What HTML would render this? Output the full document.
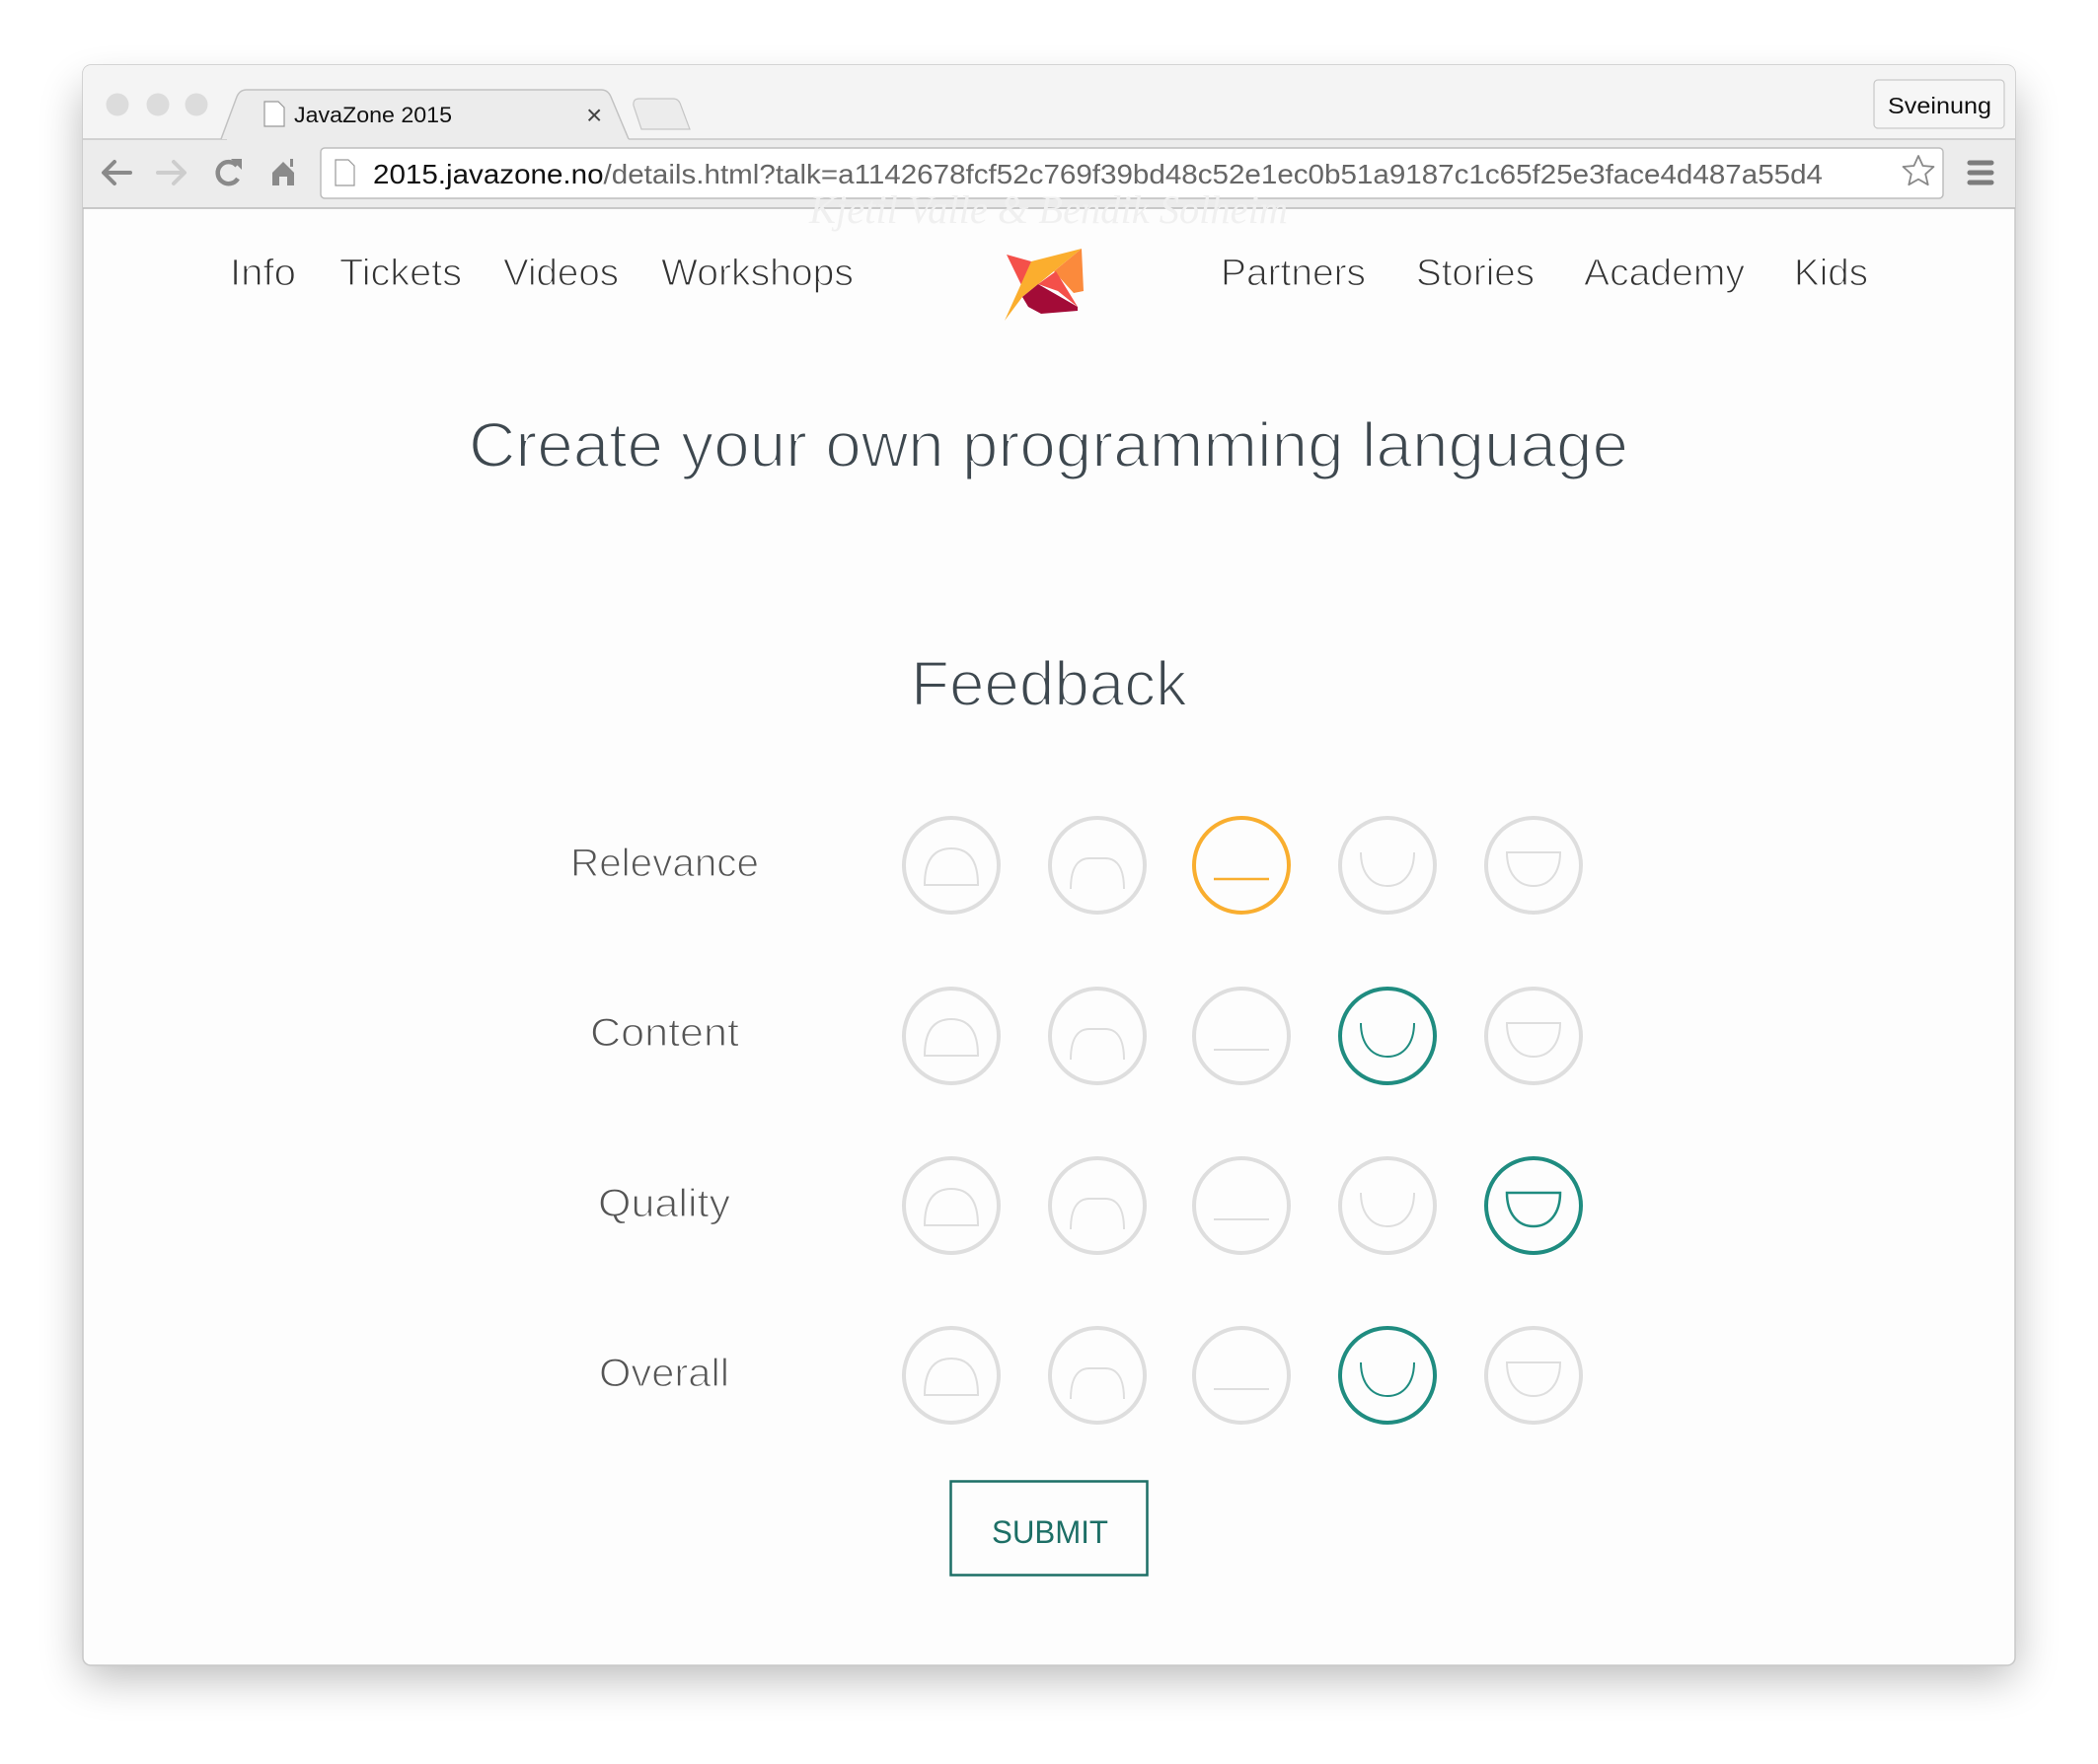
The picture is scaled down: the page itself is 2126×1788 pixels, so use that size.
<!DOCTYPE html>
<html><head><meta charset="utf-8"><style>
html,body{margin:0;padding:0;background:#fff;width:2126px;height:1788px;overflow:hidden}
</style></head><body>
<svg width="2126" height="1788" viewBox="0 0 2126 1788" xmlns="http://www.w3.org/2000/svg" style="display:block">
<defs>
<filter id="sh" x="-10%" y="-10%" width="120%" height="125%"><feGaussianBlur stdDeviation="22"/></filter>
</defs>
<rect width="2126" height="1788" fill="#fff"/>
<rect x="84" y="90" width="1958" height="1610" rx="8" fill="#000" opacity="0.28" filter="url(#sh)"/>
<rect x="84" y="66" width="1958" height="1622" rx="8" fill="#fdfdfd" stroke="#c8c8c8" stroke-width="1.5"/>
<path d="M84 141 V74 a8 8 0 0 1 8 -8 H2034 a8 8 0 0 1 8 8 V141 Z" fill="#f4f4f4"/>
<rect x="84" y="141" width="1958" height="70" fill="#ececec"/>
<line x1="84" y1="141" x2="230" y2="141" stroke="#c6c6c6" stroke-width="1.5"/>
<line x1="637" y1="141" x2="2042" y2="141" stroke="#c6c6c6" stroke-width="1.5"/>
<line x1="84" y1="211" x2="2042" y2="211" stroke="#b9b9b9" stroke-width="1.5"/>
<circle cx="119" cy="106" r="11.5" fill="#dcdcdc"/>
<circle cx="160" cy="106" r="11.5" fill="#dcdcdc"/>
<circle cx="199" cy="106" r="11.5" fill="#dcdcdc"/>
<path d="M224 141 L240 98 Q243 91 250 91 H609 Q616 91 619 98 L637 141" fill="#ececec" stroke="#c2c2c2" stroke-width="1.5"/>
<path d="M650 131 L642 107 Q641 100 648 100 H682 Q688 100 690 107 L699 131 Z" fill="#ececec" stroke="#c6c6c6" stroke-width="1.2"/>
<path d="M268 103 h14 l6 6 v19 h-20 z" fill="#fff" stroke="#999" stroke-width="1.2"/>
<text x="298" y="124" font-family="Liberation Sans, sans-serif" font-size="22" fill="#111" textLength="160" lengthAdjust="spacingAndGlyphs">JavaZone 2015</text>
<text x="594" y="126" font-family="Liberation Sans, sans-serif" font-size="28" fill="#444">×</text>
<rect x="1899" y="81" width="132" height="49" rx="4" fill="#f6f6f6" stroke="#c9c9c9" stroke-width="1.2"/>
<text x="1913" y="115" font-family="Liberation Sans, sans-serif" font-size="23" fill="#111" textLength="105" lengthAdjust="spacingAndGlyphs">Sveinung</text>
<g fill="none" stroke="#8a8a8a" stroke-width="4" stroke-linecap="round" stroke-linejoin="round">
<path d="M132 175 H106 M116 164 L105 175 L116 186"/>
</g>
<g fill="none" stroke="#cdcdcd" stroke-width="4" stroke-linecap="round" stroke-linejoin="round">
<path d="M160 175 H186 M176 164 L187 175 L176 186"/>
</g>
<path d="M240 168 A11 11 0 1 0 241 181" fill="none" stroke="#8a8a8a" stroke-width="4.5"/>
<path d="M234 161 L245 161 L245 172 Z" fill="#8a8a8a"/>
<path d="M287 164 L276 175 V188 H283 V179 H291 V188 H298 V175 Z" fill="#8a8a8a"/>
<rect x="294" y="161" width="3" height="8" fill="#8a8a8a"/>
<rect x="325" y="150" width="1644" height="51" rx="4" fill="#fff" stroke="#bdbdbd" stroke-width="1.5"/>
<path d="M340 162 h13 l6 6 v20 h-19 z" fill="#fff" stroke="#999" stroke-width="1.2"/>
<text x="378" y="186" font-family="Liberation Sans, sans-serif" font-size="28" textLength="1469" lengthAdjust="spacingAndGlyphs"><tspan fill="#111">2015.javazone.no</tspan><tspan fill="#666">/details.html?talk=a1142678fcf52c769f39bd48c52e1ec0b51a9187c1c65f25e3face4d487a55d4</tspan></text>
<path d="M1944 158 l4.5 10 l11 1 l-8.3 7.4 l2.5 10.8 l-9.7 -5.6 l-9.7 5.6 l2.5 -10.8 l-8.3 -7.4 l11 -1 z" fill="none" stroke="#888" stroke-width="1.8" stroke-linejoin="round"/>
<g stroke="#7c7c7c" stroke-width="5" stroke-linecap="round"><line x1="1996" y1="165" x2="2018" y2="165"/><line x1="1996" y1="175" x2="2018" y2="175"/><line x1="1996" y1="185" x2="2018" y2="185"/></g>
<text x="820" y="226" font-family="Liberation Serif, serif" font-style="italic" font-size="40" fill="#f0f0f0" textLength="485" lengthAdjust="spacingAndGlyphs">Kjetil Valle &amp; Bendik Solheim</text>
<g font-family="Liberation Sans, sans-serif" font-size="38" fill="#333" stroke="#fdfdfd" stroke-width="1.2">
<text x="233" y="289" textLength="67" lengthAdjust="spacingAndGlyphs">Info</text>
<text x="344" y="289" textLength="124" lengthAdjust="spacingAndGlyphs">Tickets</text>
<text x="510" y="289" textLength="117" lengthAdjust="spacingAndGlyphs">Videos</text>
<text x="670" y="289" textLength="195" lengthAdjust="spacingAndGlyphs">Workshops</text>
<text x="1237" y="289" textLength="147" lengthAdjust="spacingAndGlyphs">Partners</text>
<text x="1435" y="289" textLength="120" lengthAdjust="spacingAndGlyphs">Stories</text>
<text x="1605" y="289" textLength="163" lengthAdjust="spacingAndGlyphs">Academy</text>
<text x="1818" y="289" textLength="75" lengthAdjust="spacingAndGlyphs">Kids</text>
</g>
<g transform="translate(1010,245)">
<polygon points="10,13 35,20 26,46" fill="#f4504a"/>
<polygon points="86,7 88,50 78,52 58,30" fill="#fb8a3c"/>
<polygon points="86,7 35,20 8,80 26,56 42,43" fill="#fbae2e"/>
<polygon points="42,43 60,30 82,66 62,50" fill="#f4504a"/>
<polygon points="26,56 42,43 82,66 82,70 45,73 32,66" fill="#a30b37"/>
</g>
<g font-family="Liberation Sans, sans-serif" fill="#3e484f" stroke="#fdfdfd" stroke-width="2">
<text x="475" y="473" font-size="64" textLength="1175" lengthAdjust="spacingAndGlyphs">Create your own programming language</text>
<text x="923" y="715" font-size="64" textLength="280" lengthAdjust="spacingAndGlyphs">Feedback</text>
</g>
<g font-family="Liberation Sans, sans-serif" fill="#555" font-size="40" stroke="#fdfdfd" stroke-width="1.2">
<text x="578" y="888" textLength="191" lengthAdjust="spacingAndGlyphs">Relevance</text>
<text x="598" y="1060" textLength="151" lengthAdjust="spacingAndGlyphs">Content</text>
<text x="606" y="1233" textLength="134" lengthAdjust="spacingAndGlyphs">Quality</text>
<text x="607" y="1405" textLength="132" lengthAdjust="spacingAndGlyphs">Overall</text>
</g>
<g fill="none" stroke-width="4">
<g stroke="#dedede"><circle cx="964" cy="877" r="48"/><path d="M937 897 H991 C991 870 980 860 964 860 C948 860 937 870 937 897 Z" stroke-width="2"/></g>
<g stroke="#dedede"><circle cx="1112" cy="877" r="48"/><path d="M1085 901 C1085 880 1092 870 1104 870 H1120 C1132 870 1139 880 1139 901" stroke-width="2"/></g>
<g stroke="#f9ae2f"><circle cx="1258" cy="877" r="48"/><line x1="1230" y1="891" x2="1286" y2="891" stroke-width="2.5"/></g>
<g stroke="#dedede"><circle cx="1406" cy="877" r="48"/><path d="M1379 864 C1379 885 1390 898 1406 898 C1422 898 1433 885 1433 864" stroke-width="2"/></g>
<g stroke="#dedede"><circle cx="1554" cy="877" r="48"/><path d="M1527 864 H1581 C1581 885 1570 898 1554 898 C1538 898 1527 885 1527 864 Z" stroke-width="2"/></g>
<g stroke="#dedede"><circle cx="964" cy="1050" r="48"/><path d="M937 1070 H991 C991 1043 980 1033 964 1033 C948 1033 937 1043 937 1070 Z" stroke-width="2"/></g>
<g stroke="#dedede"><circle cx="1112" cy="1050" r="48"/><path d="M1085 1074 C1085 1053 1092 1043 1104 1043 H1120 C1132 1043 1139 1053 1139 1074" stroke-width="2"/></g>
<g stroke="#dedede"><circle cx="1258" cy="1050" r="48"/><line x1="1230" y1="1064" x2="1286" y2="1064" stroke-width="2"/></g>
<g stroke="#1f8c80"><circle cx="1406" cy="1050" r="48"/><path d="M1379 1037 C1379 1058 1390 1071 1406 1071 C1422 1071 1433 1058 1433 1037" stroke-width="2"/></g>
<g stroke="#dedede"><circle cx="1554" cy="1050" r="48"/><path d="M1527 1037 H1581 C1581 1058 1570 1071 1554 1071 C1538 1071 1527 1058 1527 1037 Z" stroke-width="2"/></g>
<g stroke="#dedede"><circle cx="964" cy="1222" r="48"/><path d="M937 1242 H991 C991 1215 980 1205 964 1205 C948 1205 937 1215 937 1242 Z" stroke-width="2"/></g>
<g stroke="#dedede"><circle cx="1112" cy="1222" r="48"/><path d="M1085 1246 C1085 1225 1092 1215 1104 1215 H1120 C1132 1215 1139 1225 1139 1246" stroke-width="2"/></g>
<g stroke="#dedede"><circle cx="1258" cy="1222" r="48"/><line x1="1230" y1="1236" x2="1286" y2="1236" stroke-width="2"/></g>
<g stroke="#dedede"><circle cx="1406" cy="1222" r="48"/><path d="M1379 1209 C1379 1230 1390 1243 1406 1243 C1422 1243 1433 1230 1433 1209" stroke-width="2"/></g>
<g stroke="#1f8c80"><circle cx="1554" cy="1222" r="48"/><path d="M1527 1209 H1581 C1581 1230 1570 1243 1554 1243 C1538 1243 1527 1230 1527 1209 Z" stroke-width="2.5"/></g>
<g stroke="#dedede"><circle cx="964" cy="1394" r="48"/><path d="M937 1414 H991 C991 1387 980 1377 964 1377 C948 1377 937 1387 937 1414 Z" stroke-width="2"/></g>
<g stroke="#dedede"><circle cx="1112" cy="1394" r="48"/><path d="M1085 1418 C1085 1397 1092 1387 1104 1387 H1120 C1132 1387 1139 1397 1139 1418" stroke-width="2"/></g>
<g stroke="#dedede"><circle cx="1258" cy="1394" r="48"/><line x1="1230" y1="1408" x2="1286" y2="1408" stroke-width="2"/></g>
<g stroke="#1f8c80"><circle cx="1406" cy="1394" r="48"/><path d="M1379 1381 C1379 1402 1390 1415 1406 1415 C1422 1415 1433 1402 1433 1381" stroke-width="2"/></g>
<g stroke="#dedede"><circle cx="1554" cy="1394" r="48"/><path d="M1527 1381 H1581 C1581 1402 1570 1415 1554 1415 C1538 1415 1527 1402 1527 1381 Z" stroke-width="2"/></g>
</g>
<rect x="963.5" y="1501.5" width="199" height="95" fill="none" stroke="#1d6f66" stroke-width="2.5"/>
<text x="1005" y="1564" font-family="Liberation Sans, sans-serif" font-size="32" fill="#1d6f66" textLength="118" lengthAdjust="spacingAndGlyphs">SUBMIT</text>
</svg>
</body></html>
